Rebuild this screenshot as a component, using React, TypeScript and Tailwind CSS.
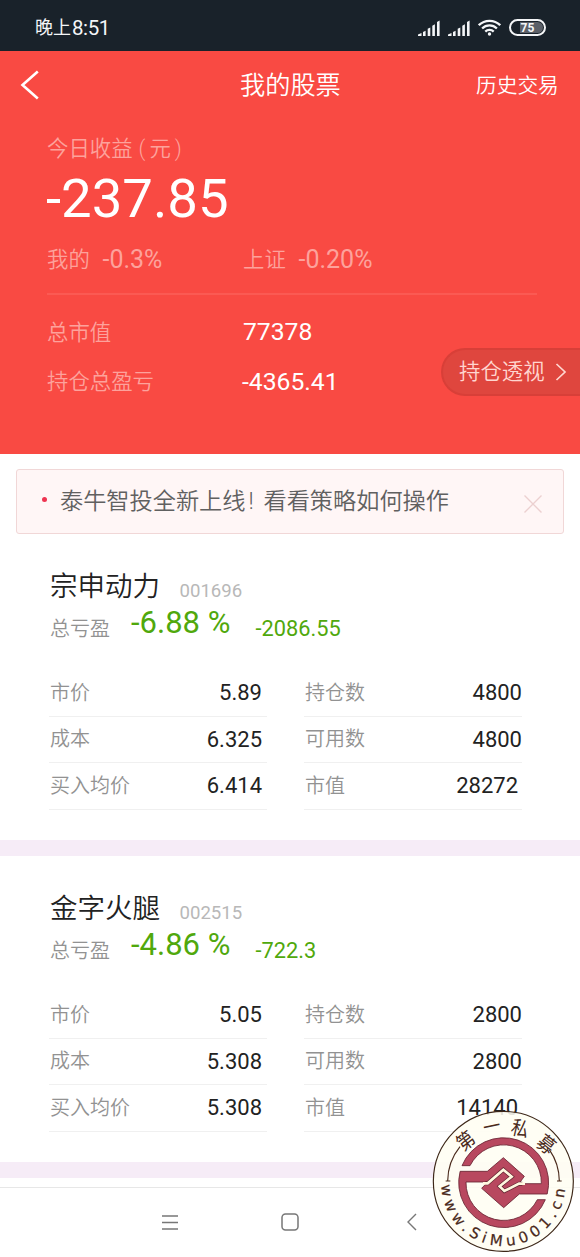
import React from "react";

type Row = [string, string];
type Stock = {
  name: string;
  code: string;
  percent: string;
  amount: string;
  left: Row[];
  right: Row[];
};

const stocks: Stock[] = [
  {
    name: "宗申动力",
    code: "001696",
    percent: "-6.88 %",
    amount: "-2086.55",
    left: [["市价", "5.89"], ["成本", "6.325"], ["买入均价", "6.414"]],
    right: [["持仓数", "4800"], ["可用数", "4800"], ["市值", "28272"]],
  },
  {
    name: "金字火腿",
    code: "002515",
    percent: "-4.86 %",
    amount: "-722.3",
    left: [["市价", "5.05"], ["成本", "5.308"], ["买入均价", "5.308"]],
    right: [["持仓数", "2800"], ["可用数", "2800"], ["市值", "14140"]],
  },
];

function Signal() {
  return (
    <svg width="22" height="16" viewBox="0 0 22 16" fill="#f4f6f8">
      <path d="M0 16v-1.5L3.5 13v3zM5 16v-4l2.6-1.3V16zM9.7 16V8.8l2.6-1.2V16zM14.3 16V5.7l2.6-1.4V16zM19 16V2l2.6-1.5V16z" />
    </svg>
  );
}

function StatusBar() {
  return (
    <div className="flex h-[51px] items-center bg-[#19222a] pt-[4px] pl-[35px] text-[#f4f6f8]">
      <div className="flex w-[383px] items-center pt-px leading-6">
        <span className="text-[18px]">晚上</span>
        <span className="ml-px text-[20.5px] tracking-[-0.4px]">8:51</span>
      </div>
      <Signal />
      <div className="w-[8px]" />
      <Signal />
      <svg className="ml-[8px]" width="23" height="17" viewBox="0 0 23 17" fill="none" stroke="#f4f6f8" strokeWidth="2.3">
        <path d="M.8 6.2a15.2 15.2 0 0 1 21.4 0" />
        <path d="M4.1 9.5a10.5 10.5 0 0 1 14.8 0" />
        <path d="M7.3 12.6a6 6 0 0 1 8.4 0" />
        <circle cx="11.5" cy="15" r="1.7" fill="#f4f6f8" stroke="none" />
      </svg>
      <div className="ml-[8px] flex h-[17px] w-[37px] items-center justify-center rounded-full border-2 border-[#f4f6f8] p-px">
        <div className="flex h-[11px] w-full items-center justify-center rounded-full bg-linear-to-r from-[#19222a] from-25% to-[#5b6068] to-25% text-[12px] leading-none font-bold">
          75
        </div>
      </div>
    </div>
  );
}

function Summary() {
  return (
    <section className="flex h-[403px] flex-col bg-[#f94a43] text-white">
      <header className="flex h-[68px] items-center">
        <svg className="ml-[20px]" width="20" height="30" viewBox="0 0 20 30" fill="none" stroke="white" strokeWidth="2.6">
          <path d="M17.8 1.5 2.5 15l15.3 13.5" />
        </svg>
        <h1 className="mt-[2px] ml-[200px] w-[236px] text-[25.2px] leading-8 font-[350]">我的股票</h1>
        <span className="mt-[2px] text-[20.7px] leading-8 font-[350] whitespace-nowrap">历史交易</span>
      </header>
      <div className="flex flex-1 flex-col pl-[47px]">
        <div className="mt-[14px] flex h-[32px] items-center pt-px text-[21.4px] font-[350] text-[#fda29c]">
          今日收益<span className="ml-[6px]">(</span><span className="ml-[4px]">元</span><span className="ml-[4px]">)</span>
        </div>
        <div className="-ml-px flex h-[66px] items-center text-[54.5px] leading-none">-237.85</div>
        <div className="mt-[13px] flex h-[32px] items-center text-[#fda29c]">
          <span className="w-[55.5px] pt-px text-[21.4px] font-[350]">我的</span>
          <span className="w-[140.5px] text-[25px]">-0.3%</span>
          <span className="w-[55.5px] pt-px text-[21.4px] font-[350]">上证</span>
          <span className="text-[25px]">-0.20%</span>
        </div>
        <div className="mt-[17px] h-[2px] w-[490px] bg-[#fb5a53]" />
        <div className="mt-[21px] flex h-[32px] items-center">
          <span className="w-[196px] pt-[2px] text-[21.4px] font-[350] text-[#fda29c]">总市值</span>
          <span className="text-[24.7px]">77378</span>
        </div>
        <div className="flex h-[50px] items-end">
          <span className="flex h-[32px] w-[195px] items-center pt-px text-[21.4px] font-[350] text-[#fda29c]">持仓总盈亏</span>
          <span className="flex h-[32px] flex-1 items-center text-[24.7px]">-4365.41</span>
          <button className="mb-[2px] flex h-[48px] w-[139px] items-center rounded-l-full border-2 border-r-0 border-[#d83f38] bg-[#df463e] pl-[16px] text-[21.4px] font-[350] text-[#ffd6d0]">
            持仓透视
            <svg className="ml-[10px]" width="12" height="18" viewBox="0 0 12 18" fill="none" stroke="#ffd6d0" strokeWidth="1.7">
              <path d="m1.5 1 8.5 8-8.5 8" />
            </svg>
          </button>
        </div>
      </div>
    </section>
  );
}

function Notice() {
  return (
    <div className="mx-[16px] mt-[15px] flex h-[65px] items-center rounded-[3px] border border-[#f1d7d7] bg-[#fff6f6]">
      <span className="mb-[4px] ml-[25px] size-[5px] rounded-full bg-[#ee3350]" />
      <span className="mb-[2px] ml-[13px] flex w-[464px] text-[23.2px] leading-8 font-[350] whitespace-nowrap text-[#606060]">
        泰牛智投全新上线<span className="w-[18px] pl-[3px]">!</span>看看策略如何操作
      </span>
      <svg className="mt-[4px]" width="18" height="18" viewBox="0 0 18 18" stroke="#ecd0d0" strokeWidth="1.4">
        <path d="m.5.5 17 17M17.5.5l-17 17" />
      </svg>
    </div>
  );
}

function Details({ rows, side }: { rows: Row[]; side: "left" | "right" }) {
  return (
    <div className={side === "left" ? "w-[218px]" : "ml-[37px] w-[218px]"}>
      {rows.map(([label, value]) => (
        <div key={label} className={side === "left" ? "flex h-[46.6px] items-center justify-between border-b border-[#f0f0f0] pr-[5px] pl-px" : "flex h-[46.6px] items-center justify-between border-b border-[#f0f0f0] pl-[1px]"}>
          <span className="text-[20px] font-[350] text-[#929292]">{label}</span>
          <span className={label === "市值" ? "pr-[4px] text-[22px] text-[#222]" : "text-[22px] text-[#222]"}>{value}</span>
        </div>
      ))}
    </div>
  );
}

function StockCard({ stock }: { stock: Stock }) {
  return (
    <article className="flex h-[322px] flex-col border-b-[16px] border-[#f6ecf7] pl-[49px]">
      <div className="mt-[35px] flex h-[36px] items-baseline pl-px">
        <h2 className="w-[129.5px] text-[27.5px] leading-[36px] font-[350] text-[#222]">{stock.name}</h2>
        <span className="relative top-px text-[18.6px] text-[#b8b8b8]">{stock.code}</span>
      </div>
      <div className="flex h-[38px] items-baseline pl-px">
        <span className="relative top-[3px] w-[81px] text-[20px] font-[350] text-[#929292]">总亏盈</span>
        <span className="w-[124.5px] text-[31px] leading-[36px] whitespace-pre text-[#50a80c]">{stock.percent}</span>
        <span className="relative top-[3px] text-[21.8px] text-[#50a80c]">{stock.amount}</span>
      </div>
      <div className="mt-[27px] flex">
        <Details rows={stock.left} side="left" />
        <Details rows={stock.right} side="right" />
      </div>
    </article>
  );
}

function Seal() {
  const top: [string, number, number, number][] = [
    ["第", 122, 122, -38],
    ["一", 200, 79, -12],
    ["私", 285, 85, 13],
    ["募", 364, 133, 38],
  ];
  return (
    <svg className="absolute right-0 bottom-0" width="155" height="157" viewBox="0 0 465 471">
      <circle cx="235" cy="244" r="210" fill="#fffef3" fillOpacity="0.88" stroke="#3d2718" strokeWidth="3.5" />
      <g fill="none" stroke="#4a2a1c" strokeWidth="3.5">
        <path d="M62 243h14M68 243A167 167 0 0 1 105 140" />
        <path d="M396 243h14M403 243A167 167 0 0 0 373 149" />
      </g>
      {top.map(([char, x, y, angle]) => (
        <text key={char} transform={`translate(${x} ${y}) rotate(${angle}) scale(1 1.15)`} y="19" textAnchor="middle" fontSize="52" fill="#4a2a1c">
          {char}
        </text>
      ))}
      <path id="seal-arc" d="M49 252A186 186 0 0 0 421 252" fill="none" />
      <text fontSize="45" fill="#4a2a1c" stroke="#4a2a1c" strokeWidth="0.6" className="font-['DejaVu_Sans']">
        <textPath href="#seal-arc" startOffset="3" textLength="566" lengthAdjust="spacing">www.SiMu001.cn</textPath>
      </text>
      <path
        d="M111 197A135 135 0 0 1 366.6 282H283L236 323L170 265L188 246H123A113 113 0 0 0 337 299H361A135 135 0 0 1 105.4 214H187L235 173L298 229L282 251H349A113 113 0 0 0 135 197Z"
        fill="#b8485f"
        stroke="#682331"
        strokeWidth="2.5"
      />
      <path d="M181 250H188L235 209L260 230L224 259L238 273L282 251H292" fill="none" stroke="#5e2430" strokeWidth="12" />
      <path d="M174 250H188L235 209L260 230L224 259L238 273L282 251H300" fill="none" stroke="#fff8df" strokeWidth="8" />
    </svg>
  );
}

function NavigationBar() {
  return (
    <nav className="mt-[9px] flex h-[70px] items-center border-t border-[#e7e7e7] bg-white pl-[162px]">
      <svg width="16" height="15" viewBox="0 0 16 15" stroke="#777" strokeWidth="1.4">
        <path d="M0 1h16M0 7.5h16M0 14h16" />
      </svg>
      <svg className="mb-[2px] ml-[103px]" width="18" height="18" viewBox="0 0 18 18" fill="none" stroke="#777" strokeWidth="1.5">
        <rect x="1" y="1" width="16" height="16" rx="3.5" />
      </svg>
      <svg className="mb-[2px] ml-[108px]" width="10" height="18" viewBox="0 0 10 18" fill="none" stroke="#777" strokeWidth="1.4">
        <path d="M9 1 1 9l8 8" />
      </svg>
    </nav>
  );
}

export default function App() {
  return (
    <main className="relative h-[1257px] w-[580px] overflow-hidden bg-white font-[Roboto,'Noto_Sans_CJK_SC',sans-serif]">
      <StatusBar />
      <Summary />
      <Notice />
      {stocks.map((stock) => (
        <StockCard key={stock.code} stock={stock} />
      ))}
      <NavigationBar />
      <Seal />
    </main>
  );
}
